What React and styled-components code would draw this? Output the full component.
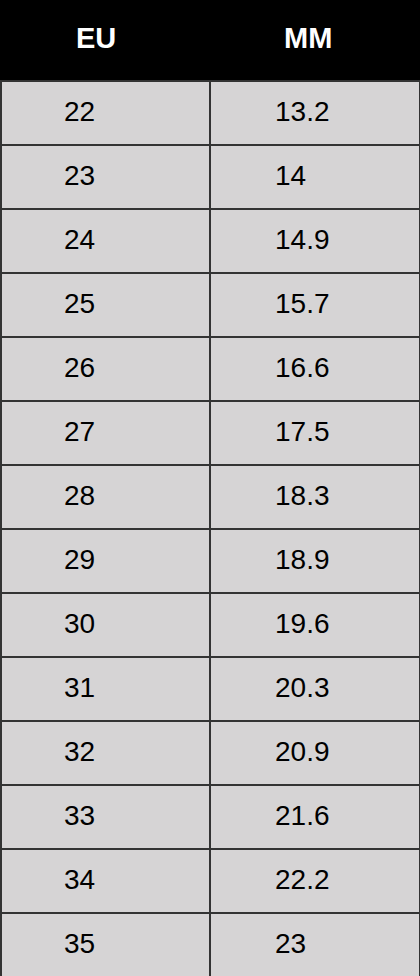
import React from "react";
import styled, { createGlobalStyle } from "styled-components";

const Global = createGlobalStyle`
  html, body { margin: 0; padding: 0; background: #ffffff; }
  body { font-family: "Liberation Sans", Arial, sans-serif; }
`;

const Table = styled.div`
  width: 420px;
  box-sizing: border-box;
  border-left: 2px solid #333333;
  border-right: 1px solid #333333;
  border-bottom: 1px solid #333333;
  background: #d6d4d5;
`;

const HeaderRow = styled.div`
  display: grid;
  grid-template-columns: 207px 2px 1fr;
  height: 80px;
  margin-left: -2px;
  margin-right: -1px;
  background: #000000;
`;

const HeaderCell = styled.div`
  display: flex;
  align-items: center;
  padding-left: ${(p) => p.$pad}px;
  color: #ffffff;
  font-size: 29px;
  font-weight: 700;
  padding-bottom: 4px;
`;

const Row = styled.div`
  display: grid;
  grid-template-columns: 207px 2px 1fr;
  height: 62px;
  border-top: 2px solid #333333;
`;

const Divider = styled.div`
  background: ${(p) => (p.$dark ? "#000000" : "#333333")};
`;

const Cell = styled.div`
  display: flex;
  align-items: center;
  padding-left: ${(p) => p.$pad}px;
  color: #000000;
  font-size: 28px;
  padding-bottom: 2px;
`;

const data = [
  ["22", "13.2"],
  ["23", "14"],
  ["24", "14.9"],
  ["25", "15.7"],
  ["26", "16.6"],
  ["27", "17.5"],
  ["28", "18.3"],
  ["29", "18.9"],
  ["30", "19.6"],
  ["31", "20.3"],
  ["32", "20.9"],
  ["33", "21.6"],
  ["34", "22.2"],
  ["35", "23"],
];

export default function App() {
  return (
    <>
      <Global />
      <Table>
        <HeaderRow>
          <HeaderCell $pad={76}>EU</HeaderCell>
          <Divider $dark />
          <HeaderCell $pad={75}>MM</HeaderCell>
        </HeaderRow>
        {data.map(([eu, mm]) => (
          <Row key={eu}>
            <Cell $pad={62}>{eu}</Cell>
            <Divider />
            <Cell $pad={64}>{mm}</Cell>
          </Row>
        ))}
      </Table>
    </>
  );
}
